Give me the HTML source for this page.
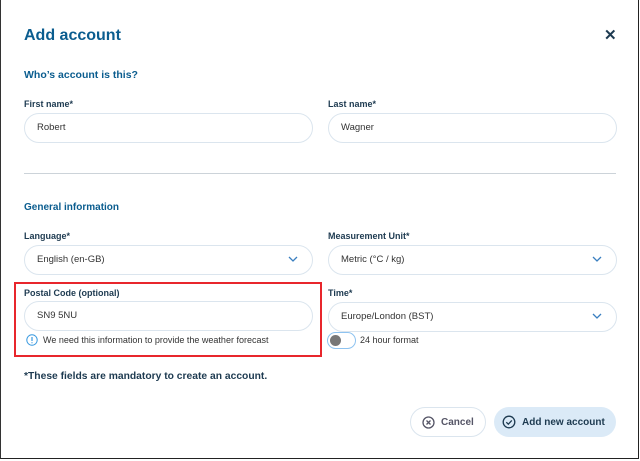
<!DOCTYPE html><html><head><style>
*{box-sizing:border-box;margin:0;padding:0}
body{width:640px;height:461px;background:#fff;font-family:"Liberation Sans",sans-serif;position:relative;overflow:hidden}
.frame{position:absolute;left:0;top:0;width:639px;height:459px;border:1px solid #222;border-top:none;border-left:1.5px solid #333}
.a{position:absolute}
.t{color:#0b5d8f;font-weight:bold}
.lbl{position:absolute;font-size:9px;font-weight:bold;color:#1d3a50}
.inp{position:absolute;height:30px;border:1px solid #dbe5ee;border-radius:15px;font-size:9.5px;color:#333;padding-left:12px;line-height:28px}
.chev{position:absolute;right:14px;top:9px}
</style></head><body>
<div class="frame"></div>
<div class="a t" style="left:24px;top:27px;font-size:16px">Add account</div>
<div class="a" style="left:604px;top:26px;font-size:15px;font-weight:bold;color:#1d3a50">✕</div>
<div class="a t" style="left:24px;top:69px;font-size:10.5px">Who’s account is this?</div>
<div class="lbl" style="left:24px;top:99px">First name*</div>
<div class="inp" style="left:24px;top:113px;width:289px">Robert</div>
<div class="lbl" style="left:328px;top:99px">Last name*</div>
<div class="inp" style="left:328px;top:113px;width:289px">Wagner</div>
<div class="a" style="left:24px;top:173px;width:592px;height:1px;background:#ccd3d9"></div>
<div class="a t" style="left:24px;top:202px;font-size:10px">General information</div>
<div class="lbl" style="left:24px;top:231px">Language*</div>
<div class="inp" style="left:24px;top:245px;width:289px">English (en-GB)<svg class="chev" width="10" height="8" viewBox="0 0 10 8"><path d="M1 2l4 4 4-4" fill="none" stroke="#3a7fc0" stroke-width="1.3"/></svg></div>
<div class="lbl" style="left:328px;top:231px">Measurement Unit*</div>
<div class="inp" style="left:328px;top:245px;width:289px">Metric (°C / kg)<svg class="chev" width="10" height="8" viewBox="0 0 10 8"><path d="M1 2l4 4 4-4" fill="none" stroke="#3a7fc0" stroke-width="1.3"/></svg></div>
<div class="a" style="left:14px;top:282px;width:308px;height:75px;border:2px solid #e8262c"></div>
<div class="lbl" style="left:24px;top:288px">Postal Code (optional)</div>
<div class="inp" style="left:24px;top:301px;width:289px">SN9 5NU</div>
<svg class="a" style="left:26px;top:334px" width="12" height="12" viewBox="0 0 12 12"><circle cx="6" cy="6" r="5.2" fill="none" stroke="#3a9ae0" stroke-width="1"/><path d="M6 3v4M6 8.3v.9" stroke="#3a9ae0" stroke-width="1.2"/></svg>
<div class="a" style="left:43px;top:335px;font-size:9px;color:#333">We need this information to provide the weather forecast</div>
<div class="lbl" style="left:328px;top:288px">Time*</div>
<div class="inp" style="left:328px;top:302px;width:289px">Europe/London (BST)<svg class="chev" width="10" height="8" viewBox="0 0 10 8"><path d="M1 2l4 4 4-4" fill="none" stroke="#3a7fc0" stroke-width="1.3"/></svg></div>
<div class="a" style="left:327px;top:332px;width:29px;height:17px;border:1.5px solid #8ec3f0;border-radius:9px;background:#fff"><div style="position:absolute;left:2px;top:2px;width:11px;height:11px;border-radius:50%;background:#777"></div></div>
<div class="a" style="left:360px;top:335px;font-size:9px;color:#333">24 hour format</div>
<div class="a" style="left:24px;top:371px;font-size:10.3px;font-weight:bold;color:#1d3a50">*These fields are mandatory to create an account.</div>
<div class="a" style="left:410px;top:407px;width:76px;height:30px;border:1px solid #dbe5ee;border-radius:15px;font-size:10px;font-weight:bold;color:#556;line-height:29px;padding-left:30px">Cancel
<svg style="position:absolute;left:11px;top:8px" width="13" height="13" viewBox="0 0 13 13"><circle cx="6.5" cy="6.5" r="5.5" fill="none" stroke="#556" stroke-width="1.3"/><path d="M4.5 4.5l4 4M8.5 4.5l-4 4" stroke="#556" stroke-width="1.3"/></svg></div>
<div class="a" style="left:494px;top:407px;width:122px;height:30px;background:#dbeaf7;border-radius:15px;font-size:10px;font-weight:bold;color:#1d3a50;line-height:31px;padding-left:28px">Add new account
<svg style="position:absolute;left:8px;top:8px" width="14" height="14" viewBox="0 0 14 14"><circle cx="7" cy="7" r="5.8" fill="none" stroke="#1d3a50" stroke-width="1.3"/><path d="M4.3 7.2l2 2 3.5-3.8" fill="none" stroke="#1d3a50" stroke-width="1.3"/></svg></div>
</body></html>
